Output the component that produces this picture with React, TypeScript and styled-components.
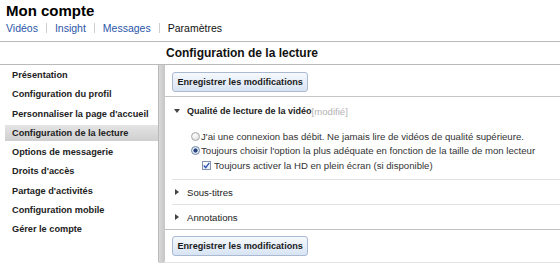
import styled, { createGlobalStyle } from "styled-components";

const GlobalStyle = createGlobalStyle`
  html, body {
    margin: 0;
    padding: 0;
    background: #fff;
  }
  body {
    font-family: "Liberation Sans", Arial, sans-serif;
    color: #222;
  }
`;

const menu = [
  "Présentation",
  "Configuration du profil",
  "Personnaliser la page d'accueil",
  "Configuration de la lecture",
  "Options de messagerie",
  "Droits d'accès",
  "Partage d'activités",
  "Configuration mobile",
  "Gérer le compte",
];

const tabs = ["Vidéos", "Insight", "Messages", "Paramètres"];

const Page = styled.div`
  width: 560px;
`;

const Masthead = styled.header`
  padding: 2px 6px 0;
`;

const Title = styled.h1`
  margin: 0;
  font-size: 15px;
  line-height: 17px;
  font-weight: bold;
  color: #000;
`;

const Tabs = styled.nav`
  display: flex;
  align-items: center;
  margin-top: 2.5px;
  height: 13px;
`;

const Tab = styled.a<{ $active?: boolean }>`
  font-size: 10.5px;
  line-height: 13px;
  color: ${(p) => (p.$active ? "#111" : "#2b56a8")};
  text-decoration: none;
`;

const TabDivider = styled.span`
  width: 1px;
  height: 10px;
  margin: 0 8px;
  background: #cfcfcf;
`;

const SectionBar = styled.h2`
  margin: 6.5px 0 0;
  height: 22px;
  line-height: 22px;
  padding-left: 166px;
  border-top: 1px solid #bababa;
  border-bottom: 1px solid #bababa;
  font-size: 12px;
  font-weight: bold;
  color: #111;
`;

const Body = styled.div`
  display: flex;
`;

const Sidebar = styled.ul`
  list-style: none;
  margin: 0;
  padding: 2px 0 0 5px;
  width: 153px;
  flex: none;
  display: flex;
  flex-direction: column;
  gap: 3.25px;
`;

const SideItem = styled.li<{ $selected?: boolean }>`
  height: 16px;
  line-height: 16px;
  padding-left: 7px;
  font-size: 9.2px;
  font-weight: bold;
  color: #222;
  white-space: nowrap;
  background: ${(p) =>
    p.$selected ? "linear-gradient(to bottom, #e4e4e4, #cfcfcf)" : "none"};
`;

const Rail = styled.div`
  width: 6px;
  flex: none;
  border-left: 1px solid #b9b9b9;
  background: linear-gradient(to right, #d9d9d9, #c6c6c6);
  border-radius: 0 0 2px 2px;
`;

const Content = styled.main`
  flex: 1;
  min-width: 0;
`;

const ActionBar = styled.div<{ $bottom?: boolean }>`
  padding: ${(p) => (p.$bottom ? "5px 7px 6px" : "6px 7px 4px")};
  border-top: ${(p) => (p.$bottom ? "1px solid #c2c2c2" : "none")};
  border-bottom: 1px solid ${(p) => (p.$bottom ? "#e4e4e4" : "#c6c6c6")};
`;

const SaveButton = styled.button`
  height: 20px;
  padding: 0 4.5px;
  border: 1px solid #a9b9d2;
  border-radius: 3px;
  background: linear-gradient(to bottom, #f6f9fd, #d8e4f4);
  font-family: inherit;
  font-size: 9.1px;
  font-weight: bold;
  color: #1a1a1a;
  white-space: nowrap;
`;

const Panels = styled.div`
  padding-left: 7px;
`;

const Panel = styled.section<{ $divider?: boolean }>`
  border-bottom: ${(p) => (p.$divider ? "1px solid #e2e2e2" : "none")};
`;

const PanelHead = styled.div<{ $open?: boolean }>`
  display: flex;
  align-items: center;
  height: 24px;
  margin-top: ${(p) => (p.$open ? "2px" : "0")};
  font-size: ${(p) => (p.$open ? "9px" : "9.6px")};
  font-weight: ${(p) => (p.$open ? "bold" : "normal")};
  color: #222;
`;

const Caret = styled.span<{ $open?: boolean }>`
  width: 0;
  height: 0;
  margin-left: ${(p) => (p.$open ? "2px" : "3px")};
  margin-right: ${(p) => (p.$open ? "7px" : "8px")};
  border-style: solid;
  border-color: transparent;
  ${(p) =>
    p.$open
      ? "border-width: 4px 3px 0 3px; border-top-color: #444;"
      : "border-width: 3.5px 0 3.5px 4.5px; border-left-color: #444;"}
`;

const Modified = styled.span`
  font-weight: normal;
  font-size: 9.6px;
  color: #b3b3b3;
`;

const Options = styled.div`
  margin-top: 6px;
  padding-bottom: 6.5px;
`;

const OptionRow = styled.label<{ $indent: number }>`
  display: flex;
  align-items: center;
  gap: 1.5px;
  height: 14.5px;
  padding-left: ${(p) => p.$indent}px;
  font-size: 9.6px;
  color: #333;
  white-space: nowrap;
`;

const Radio = styled.span<{ $checked?: boolean }>`
  width: 7px;
  height: 7px;
  flex: none;
  border-radius: 50%;
  border: 1px solid ${(p) => (p.$checked ? "#6f86a8" : "#a9a9a9")};
  background: ${(p) =>
    p.$checked
      ? "radial-gradient(circle, #27447e 0 1.8px, #e6ecf6 2.4px)"
      : "radial-gradient(circle at 40% 35%, #ffffff, #d6d6d6)"};
`;

const CheckBox = styled.span`
  width: 7px;
  height: 7px;
  flex: none;
  border: 1px solid #8392ad;
  background: linear-gradient(to bottom, #ffffff, #e9edf4);
  display: flex;
  align-items: center;
  justify-content: center;
  margin-right: 1.5px;

  svg {
    display: block;
  }
`;

export default function App() {
  return (
    <Page>
      <GlobalStyle />
      <Masthead>
        <Title>Mon compte</Title>
        <Tabs>
          {tabs.map((t, i) => (
            <span key={t} style={{ display: "contents" }}>
              {i > 0 && <TabDivider />}
              <Tab $active={t === "Paramètres"}>{t}</Tab>
            </span>
          ))}
        </Tabs>
      </Masthead>
      <SectionBar>Configuration de la lecture</SectionBar>
      <Body>
        <Sidebar>
          {menu.map((m) => (
            <SideItem key={m} $selected={m === "Configuration de la lecture"}>
              {m}
            </SideItem>
          ))}
        </Sidebar>
        <Rail />
        <Content>
          <ActionBar>
            <SaveButton>Enregistrer les modifications</SaveButton>
          </ActionBar>
          <Panels>
            <Panel $divider>
              <PanelHead $open>
                <Caret $open />
                Qualité de lecture de la vidéo<Modified>[modifié]</Modified>
              </PanelHead>
              <Options>
                <OptionRow $indent={18.5}>
                  <Radio />
                  J'ai une connexion bas débit. Ne jamais lire de vidéos de qualité supérieure.
                </OptionRow>
                <OptionRow $indent={18.5}>
                  <Radio $checked />
                  Toujours choisir l'option la plus adéquate en fonction de la taille de mon lecteur
                </OptionRow>
                <OptionRow $indent={30}>
                  <CheckBox>
                    <svg width="7" height="7" viewBox="0 0 7 7">
                      <path
                        d="M0.8 3.6 L2.7 5.6 L6.3 0.9"
                        fill="none"
                        stroke="#2f56b0"
                        strokeWidth="1.4"
                      />
                    </svg>
                  </CheckBox>
                  Toujours activer la HD en plein écran (si disponible)
                </OptionRow>
              </Options>
            </Panel>
            <Panel $divider>
              <PanelHead>
                <Caret />
                Sous-titres
              </PanelHead>
            </Panel>
            <Panel>
              <PanelHead>
                <Caret />
                Annotations
              </PanelHead>
            </Panel>
          </Panels>
          <ActionBar $bottom>
            <SaveButton>Enregistrer les modifications</SaveButton>
          </ActionBar>
        </Content>
      </Body>
    </Page>
  );
}
